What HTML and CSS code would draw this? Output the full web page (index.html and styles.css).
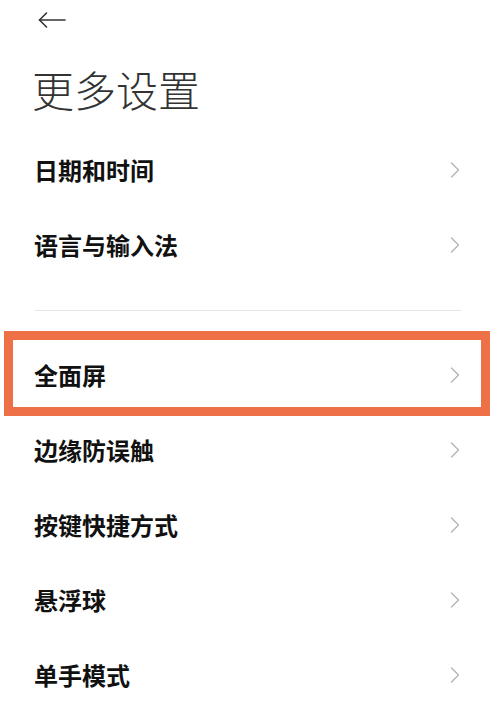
FILE: index.html
```html
<!DOCTYPE html>
<html lang="zh-CN">
<head>
<meta charset="utf-8">
<title>更多设置</title>
<link rel="stylesheet" href="styles.css">
</head>
<body>
<div class="page">
  <div class="header">
    <svg class="back" width="28" height="16" viewBox="0 0 28 16" fill="none" stroke="#333" stroke-width="1.6" stroke-linecap="round" stroke-linejoin="round">
      <path d="M1.5 8 H27"/>
      <path d="M8.5 1 L1.5 8 L8.5 15"/>
    </svg>
  </div>
  <h1 class="title">更多设置</h1>
  <div class="list">
    <div class="row"><span class="label">日期和时间</span><svg class="chev" width="10" height="16" viewBox="0 0 10 16" fill="none" stroke="#b5b5b5" stroke-width="1.4" stroke-linecap="round" stroke-linejoin="round"><path d="M1.5 1 L8.5 8 L1.5 15"/></svg></div>
    <div class="row"><span class="label">语言与输入法</span><svg class="chev" width="10" height="16" viewBox="0 0 10 16" fill="none" stroke="#b5b5b5" stroke-width="1.4" stroke-linecap="round" stroke-linejoin="round"><path d="M1.5 1 L8.5 8 L1.5 15"/></svg></div>
  </div>
  <div class="divider"></div>
  <div class="list">
    <div class="row highlighted"><span class="label">全面屏</span><svg class="chev" width="10" height="16" viewBox="0 0 10 16" fill="none" stroke="#b5b5b5" stroke-width="1.4" stroke-linecap="round" stroke-linejoin="round"><path d="M1.5 1 L8.5 8 L1.5 15"/></svg><div class="mark"></div></div>
    <div class="row"><span class="label">边缘防误触</span><svg class="chev" width="10" height="16" viewBox="0 0 10 16" fill="none" stroke="#b5b5b5" stroke-width="1.4" stroke-linecap="round" stroke-linejoin="round"><path d="M1.5 1 L8.5 8 L1.5 15"/></svg></div>
    <div class="row"><span class="label">按键快捷方式</span><svg class="chev" width="10" height="16" viewBox="0 0 10 16" fill="none" stroke="#b5b5b5" stroke-width="1.4" stroke-linecap="round" stroke-linejoin="round"><path d="M1.5 1 L8.5 8 L1.5 15"/></svg></div>
    <div class="row"><span class="label">悬浮球</span><svg class="chev" width="10" height="16" viewBox="0 0 10 16" fill="none" stroke="#b5b5b5" stroke-width="1.4" stroke-linecap="round" stroke-linejoin="round"><path d="M1.5 1 L8.5 8 L1.5 15"/></svg></div>
    <div class="row"><span class="label">单手模式</span><svg class="chev" width="10" height="16" viewBox="0 0 10 16" fill="none" stroke="#b5b5b5" stroke-width="1.4" stroke-linecap="round" stroke-linejoin="round"><path d="M1.5 1 L8.5 8 L1.5 15"/></svg></div>
  </div>
</div>
</body>
</html>
```

FILE: styles.css
```css
html, body {
  margin: 0;
  padding: 0;
  background: #ffffff;
}

body {
  font-family: "Noto Sans CJK SC", "Noto Sans", sans-serif;
  color: #111;
}

.page {
  width: 494px;
  height: 726px;
  overflow: hidden;
  position: relative;
}

.header {
  height: 40px;
  display: flex;
  align-items: center;
  padding-left: 38px;
}

.back {
  display: block;
}

.title {
  margin: 20px 0 0 0;
  height: 58px;
  line-height: 58px;
  padding-left: 32px;
  font-size: 42px;
  font-weight: 300;
  color: #333;
  letter-spacing: 0;
}

.list {
  margin-top: 14px;
}

.divider + .list {
  margin-top: 0;
}

.divider {
  height: 55px;
  padding: 28px 33px 0 35px;
  box-sizing: border-box;
}

.divider::before {
  content: "";
  display: block;
  width: 100%;
  height: 1px;
  background: #e4e4e4;
}

.row {
  height: 75px;
  display: flex;
  align-items: center;
  justify-content: space-between;
  padding: 0 34px 0 34px;
  position: relative;
}

.label {
  font-size: 24px;
  font-weight: 700;
  color: #111;
  line-height: 1;
}

.chev {
  display: block;
}

.mark {
  position: absolute;
  left: 4px;
  top: -6px;
  width: 486px;
  height: 85px;
  box-sizing: border-box;
  border: 9px solid #ee7047;
  pointer-events: none;
}
```
